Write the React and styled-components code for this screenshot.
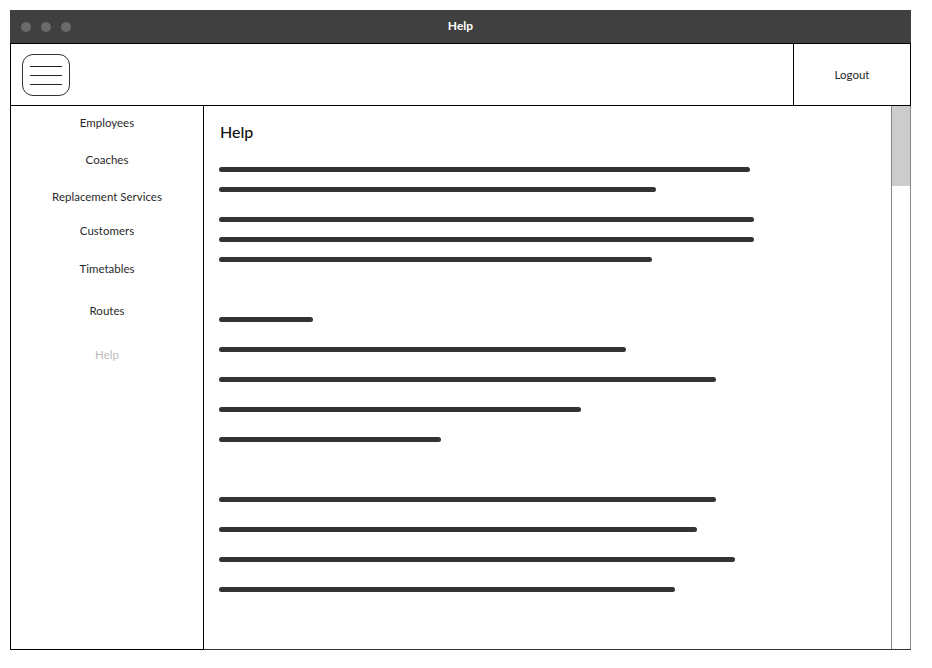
import styled, { createGlobalStyle } from "styled-components";

const GlobalStyle = createGlobalStyle`
  html, body {
    margin: 0;
    padding: 0;
    background: #ffffff;
    font-family: Lato, "Open Sans", sans-serif;
  }
`;

const Window = styled.div`
  margin: 10px 0 0 10px;
  width: 901px;
  display: flex;
  flex-direction: column;
`;

const TitleBar = styled.div`
  height: 33px;
  background-color: #404040;
  display: flex;
  align-items: center;
  position: relative;
  padding-left: 11px;
  gap: 10px;
`;

const Dot = styled.span`
  width: 10px;
  height: 10px;
  border-radius: 50%;
  background-color: #6a6a6a;
`;

const Title = styled.div`
  position: absolute;
  left: 0;
  right: 0;
  top: 8px;
  line-height: 16px;
  text-align: center;
  color: #ffffff;
  font-size: 12px;
  font-weight: 700;
`;

const Header = styled.div`
  height: 61px;
  border: 1px solid #000000;
  display: flex;
  align-items: stretch;
`;

const HeaderLeft = styled.div`
  flex: 1;
  display: flex;
  align-items: center;
  padding-left: 11px;
`;

const MenuButton = styled.button`
  width: 48px;
  height: 42px;
  border: 1px solid #333333;
  border-radius: 11px;
  background: #ffffff;
  display: flex;
  flex-direction: column;
  align-items: center;
  justify-content: center;
  gap: 8px;
  padding: 0;
  margin-top: 1px;
`;

const MenuBar = styled.span`
  width: 32px;
  height: 1px;
  background-color: #222222;
`;

const LogoutCell = styled.div`
  width: 116px;
  border-left: 1px solid #000000;
  display: flex;
  align-items: center;
  justify-content: center;
  font-size: 11.5px;
  color: #2a2a2a;
`;

const Main = styled.div`
  height: 543px;
  display: flex;
  border-left: 1px solid #000000;
  border-right: 1px solid #888888;
  border-bottom: 1px solid #333333;
`;

const Sidebar = styled.nav`
  width: 192px;
  border-right: 1px solid #000000;
  display: flex;
  flex-direction: column;
  align-items: center;
  padding-top: 9px;
  border-bottom: 1px solid #000000;
  margin-bottom: -1px;
`;

const NavItem = styled.div`
  margin-top: ${({ $top }) => $top}px;
  height: 16px;
  line-height: 16px;
  font-size: 11.5px;
  color: ${({ $active }) => ($active ? "#bdbdbd" : "#2a2a2a")};
`;

const Content = styled.main`
  flex: 1;
  padding: 16px 0 0 15px;
  display: flex;
  flex-direction: column;
`;

const Heading = styled.h1`
  margin: 0;
  height: 20px;
  line-height: 20px;
  font-size: 16px;
  font-weight: 500;
  color: #111111;
  padding-left: 1px;
`;

const TextLine = styled.div`
  margin-top: ${({ $top }) => $top}px;
  width: ${({ $width }) => $width}px;
  height: 5px;
  border-radius: 3px;
  background-color: #333333;
`;

const Scrollbar = styled.div`
  width: 18px;
  border-left: 1px solid #888888;
  display: flex;
  flex-direction: column;
`;

const Thumb = styled.div`
  height: 80px;
  background-color: #cccccc;
`;

const navItems = [
  { label: "Employees", top: 0 },
  { label: "Coaches", top: 21 },
  { label: "Replacement Services", top: 21 },
  { label: "Customers", top: 18 },
  { label: "Timetables", top: 22 },
  { label: "Routes", top: 26 },
  { label: "Help", top: 28, active: true },
];

// widths and top gaps of the placeholder text lines
const lines = [
  { width: 531, top: 25 },
  { width: 437, top: 15 },
  { width: 535, top: 25 },
  { width: 535, top: 15 },
  { width: 433, top: 15 },
  { width: 94, top: 55 },
  { width: 407, top: 25 },
  { width: 497, top: 25 },
  { width: 362, top: 25 },
  { width: 222, top: 25 },
  { width: 497, top: 55 },
  { width: 478, top: 25 },
  { width: 516, top: 25 },
  { width: 456, top: 25 },
];

export default function App() {
  return (
    <>
      <GlobalStyle />
      <Window>
        <TitleBar>
          <Dot />
          <Dot />
          <Dot />
          <Title>Help</Title>
        </TitleBar>
        <Header>
          <HeaderLeft>
            <MenuButton aria-label="Menu">
              <MenuBar />
              <MenuBar />
              <MenuBar />
            </MenuButton>
          </HeaderLeft>
          <LogoutCell>Logout</LogoutCell>
        </Header>
        <Main>
          <Sidebar>
            {navItems.map((item) => (
              <NavItem key={item.label} $top={item.top} $active={item.active}>
                {item.label}
              </NavItem>
            ))}
          </Sidebar>
          <Content>
            <Heading>Help</Heading>
            {lines.map((line, i) => (
              <TextLine key={i} $width={line.width} $top={line.top} />
            ))}
          </Content>
          <Scrollbar>
            <Thumb />
          </Scrollbar>
        </Main>
      </Window>
    </>
  );
}
